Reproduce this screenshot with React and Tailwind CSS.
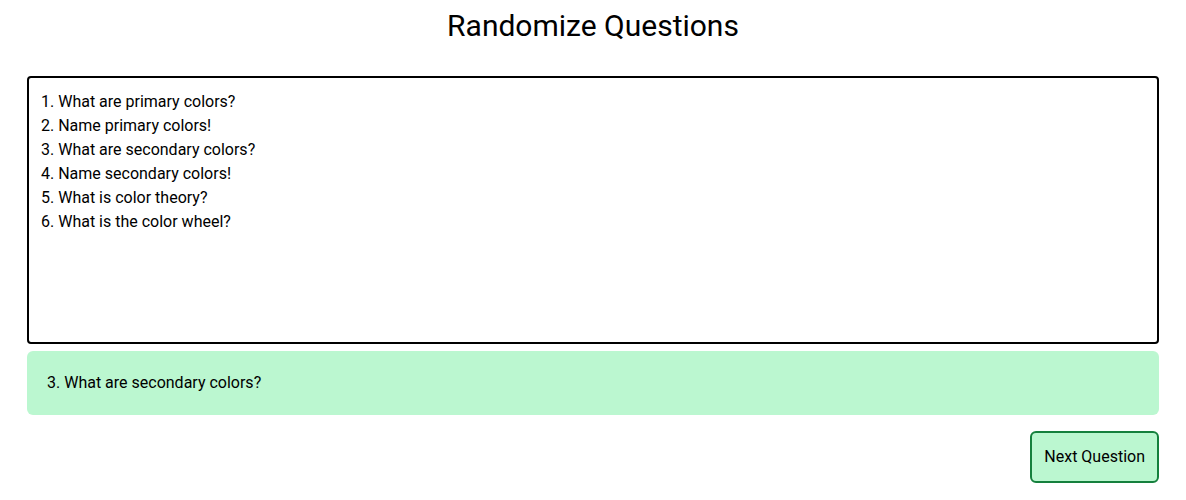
import React, { useState } from 'react';

const questions = [
  '1. What are primary colors?',
  '2. Name primary colors!',
  '3. What are secondary colors?',
  '4. Name secondary colors!',
  '5. What is color theory?',
  '6. What is the color wheel?',
];

export default function App() {
  const [text, setText] = useState(questions.join('\n'));
  const [current, setCurrent] = useState(questions[2]);

  const nextQuestion = () => {
    const list = text.split('\n').filter((q) => q.trim() !== '');
    if (list.length) setCurrent(list[Math.floor(Math.random() * list.length)]);
  };

  return (
    <div className="min-h-screen bg-white text-black px-[27px] pt-[8px]" style={{ fontFamily: 'Roboto, "Liberation Sans", sans-serif' }}>
      <h1 className="text-center text-[30px] leading-9 mb-8">Randomize Questions</h1>
      <div className="flex flex-col">
        <textarea
          value={text}
          onChange={(e) => setText(e.target.value)}
          className="block w-full h-[268px] resize-none border-2 border-black rounded-[4px] px-3 py-3 text-base leading-6 outline-none"
        />
        <div className="mt-[7px] bg-[#bbf7d0] rounded-md px-5 py-5 text-base leading-6">{current}</div>
        <div className="flex justify-end mt-4">
          <button
            onClick={nextQuestion}
            className="bg-[#bbf7d0] border-2 border-[#15803d] rounded-md px-3 py-3 text-base leading-6"
          >
            Next Question
          </button>
        </div>
      </div>
    </div>
  );
}
